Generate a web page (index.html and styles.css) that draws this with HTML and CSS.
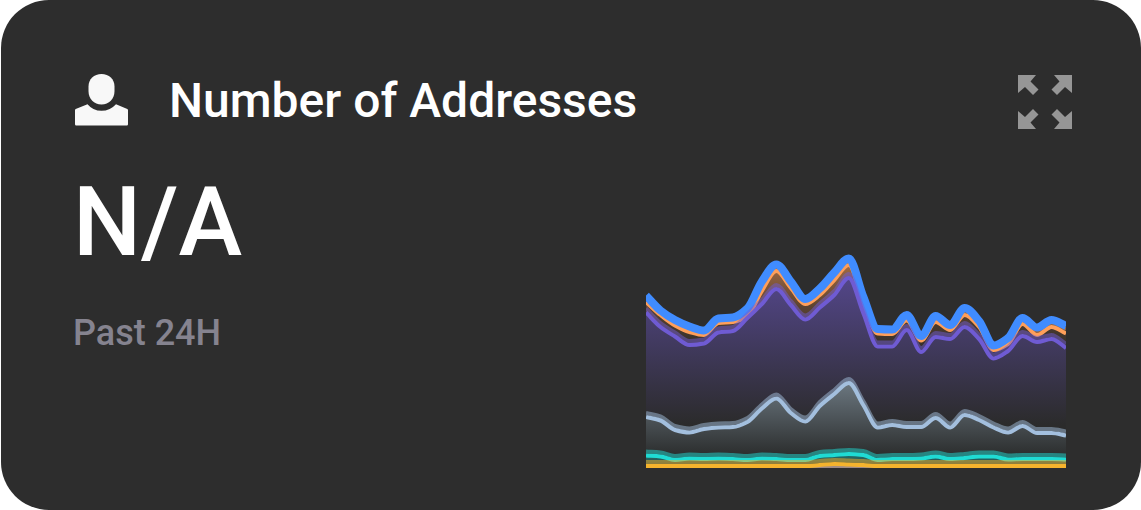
FILE: index.html
```html
<!DOCTYPE html>
<html lang="en">
<head>
<meta charset="utf-8">
<meta name="viewport" content="width=device-width, initial-scale=1">
<title>Number of Addresses</title>
<link rel="stylesheet" href="styles.css">
</head>
<body>
<article class="card">
  <header class="card-header">
    <svg class="user-icon" viewBox="0 0 54 54" aria-hidden="true">
      <path d="M26.500 0C34 0 39.500 5 39.500 12.500V17C39.500 25 34 30.500 26.500 30.500S13.500 25 13.500 17V12.500C13.500 5 19 0 26.500 0Z"/>
      <path d="M12.500 30.200Q18 36.800 26.500 36.800T41 30.200L52.300 35Q53 35.500 53 36.300V50.300Q53 51.500 51.800 51.500H1.200Q0 51.500 0 50.300V36.300Q0 35.500 .7 35Z"/>
    </svg>
    <h1 class="title">Number of Addresses</h1>
    <button class="expand" type="button" aria-label="Expand">
      <svg class="expand-icon" viewBox="0 -2 54 56" aria-hidden="true">
        <defs><path id="arrow" d="M0 0H18L12.500 6.500L20.500 14.500L15 20L7 12L0 18Z"/></defs>
        <use href="#arrow"/>
        <use href="#arrow" transform="matrix(-1 0 0 1 54 0)"/>
        <use href="#arrow" transform="matrix(1 0 0 -1 0 54)"/>
        <use href="#arrow" transform="matrix(-1 0 0 -1 54 54)"/>
      </svg>
    </button>
  </header>
  <div class="card-body">
    <div class="summary">
      <p class="value">N/A</p>
      <p class="period">Past 24H</p>
    </div>
    <svg class="chart" id="chart" viewBox="0 250 420 218" role="img" aria-label="Addresses over the past 24 hours">
      <defs>
        <linearGradient id="fill-orange" gradientUnits="userSpaceOnUse" x1="0" y1="258" x2="0" y2="355"><stop offset="0" stop-color="#ac7046"/><stop offset=".5" stop-color="#5c4331"/><stop offset="1" stop-color="#2d2c2a"/></linearGradient>
        <linearGradient id="fill-purple" gradientUnits="userSpaceOnUse" x1="0" y1="278" x2="0" y2="425"><stop offset="0" stop-color="#534689"/><stop offset="1" stop-color="#2b2b2b"/></linearGradient>
        <linearGradient id="fill-steel" gradientUnits="userSpaceOnUse" x1="0" y1="382" x2="0" y2="456"><stop offset="0" stop-color="#6c7881"/><stop offset="1" stop-color="#2b2d2d"/></linearGradient>
        <linearGradient id="fill-teal" gradientUnits="userSpaceOnUse" x1="0" y1="454" x2="0" y2="468"><stop offset="0" stop-color="#237873"/><stop offset="1" stop-color="#2c3434"/></linearGradient>
        <linearGradient id="fill-yellow" gradientUnits="userSpaceOnUse" x1="0" y1="464" x2="0" y2="468"><stop offset="0" stop-color="#a08c86"/><stop offset="1" stop-color="#a08c86"/></linearGradient>
      </defs>
    </svg>
  </div>
</article>
<script src="chart.js"></script>
</body>
</html>
```
FILE: styles.css
```css
* { box-sizing: border-box; }
body {
  margin: 0;
  background: #fff;
  font-family: Roboto, "Liberation Sans", sans-serif;
  font-weight: 500;
}
.card {
  display: flex;
  flex-direction: column;
  min-height: 100vh;
  margin-left: 1px;
  padding: 73px 69px 42px 72px;
  border-radius: 48px;
  background: #2d2d2d;
  color: #fff;
}
.card-header {
  display: flex;
  align-items: center;
  gap: 40px;
  padding-left: 2px;
}
.user-icon {
  flex: none;
  width: 54px;
  height: 54px;
  fill: #f8f8f8;
}
.title {
  flex: 1;
  margin: 0;
  font-size: 48px;
  font-weight: 500;
  line-height: 56px;
}
.expand {
  flex: none;
  padding: 0;
  border: 0;
  background: none;
  cursor: pointer;
}
.expand-icon {
  display: block;
  width: 54px;
  height: 56px;
  fill: #969696;
}
.card-body {
  display: flex;
  flex: 1;
  justify-content: space-between;
  gap: 24px;
}
.summary { padding-top: 37px; }
.value {
  margin: 0;
  font-size: 96px;
  line-height: 112px;
}
.period {
  margin: 34px 0 0;
  color: #85838f;
  font-size: 36px;
  line-height: 42px;
}
.chart {
  align-self: flex-end;
  width: 420px;
  height: 218px;
  margin-right: 6px;
}
.line {
  fill: none;
  stroke-width: 4px;
  stroke-linejoin: round;
}
.line-blue { stroke: #408cff; stroke-width: 8px; }
.line-orange { stroke: #ff9f5a; }
.line-purple { stroke: #6f5bd3; }
.line-steel { stroke: #a3bfde; }
.line-teal { stroke: #1fdbd4; }
.line-yellow { stroke: #f5b32d; }
.halo { opacity: .5; }
```
FILE: chart.js
```js
const SVG = "http://www.w3.org/2000/svg";
const chart = document.getElementById("chart");
const width = 420;
const base = 468;

const series = [
  { name: "orange", fill: true, halo: true, y: [302,315,325.5,332,335,323,322,316,291,271,288,304,295,280,265,303,333.5,334,320.5,340.5,322,330,315,327,350,344,324,335,327,333.5] },
  { name: "blue", y: [295.5,310.5,320,326.5,330.5,318.5,317.5,308.5,281.5,264.5,281.5,299,288.5,272.5,258.5,296.5,329,329.5,315,336,316,325,308,321,345.5,338,318,327.5,320,326] },
  { name: "purple", fill: true, halo: true, y: [312.5,327,336.5,345,343.5,332.5,331,318,304,289,305,319.5,307.5,295,278,313,346.5,346.5,330,352,337,339,327,339,358.5,351,336,342,339,348] },
  { name: "steel", fill: true, halo: true, y: [417,420.5,430,432.5,429,427.5,427,422,408.5,398.5,413,421.5,406,394,383,405,427.5,425,427,427,418,427.5,415,420,427.5,432.5,426,433,433,435.5] },
  { name: "teal", fill: true, halo: true, y: [455.5,456.5,460,458.5,459,458.5,459,460,458.5,459,460,460,456,455,454,455,460,459,459,458.5,456.5,459,458,456.5,456.5,459.5,459,459,459,459.5] },
  { name: "yellow", fill: true, halo: true, y: [466,466,466,466,466,466,466,466,466,466,466,466,465,464,464.5,465,466,466,466,466,466,466,466,466,466,466,466,466,466,466] }
];

// Monotone tangents keep the curves from overshooting at peaks and valleys.
function curve(values) {
  const step = width / (values.length - 1);
  const delta = values.slice(1).map((v, i) => v - values[i]);
  const tangent = values.map((v, i) => {
    if (i === 0) return delta[0];
    if (i === values.length - 1) return delta[i - 1];
    const a = delta[i - 1], b = delta[i];
    if (a * b <= 0) return 0;
    return 2 * a * b / (a + b);
  });
  let d = `M0 ${values[0]}`;
  for (let i = 1; i < values.length; i++) {
    const x = step * i;
    d += `C${x - step * 2 / 3} ${values[i - 1] + tangent[i - 1] / 3} ${x - step / 3} ${values[i] - tangent[i] / 3} ${x} ${values[i]}`;
  }
  return d;
}

function add(d, className, fill) {
  const path = document.createElementNS(SVG, "path");
  path.setAttribute("d", d);
  path.setAttribute("class", className);
  if (fill) path.setAttribute("fill", fill);
  chart.append(path);
}

for (const { name, fill, halo, y } of series) {
  if (fill) add(`${curve(y)}V${base}H0Z`, "area", `url(#fill-${name})`);
  if (halo) add(curve(y.map(v => v - 4)), `line halo line-${name}`);
  add(curve(y), `line line-${name}`);
}
```
